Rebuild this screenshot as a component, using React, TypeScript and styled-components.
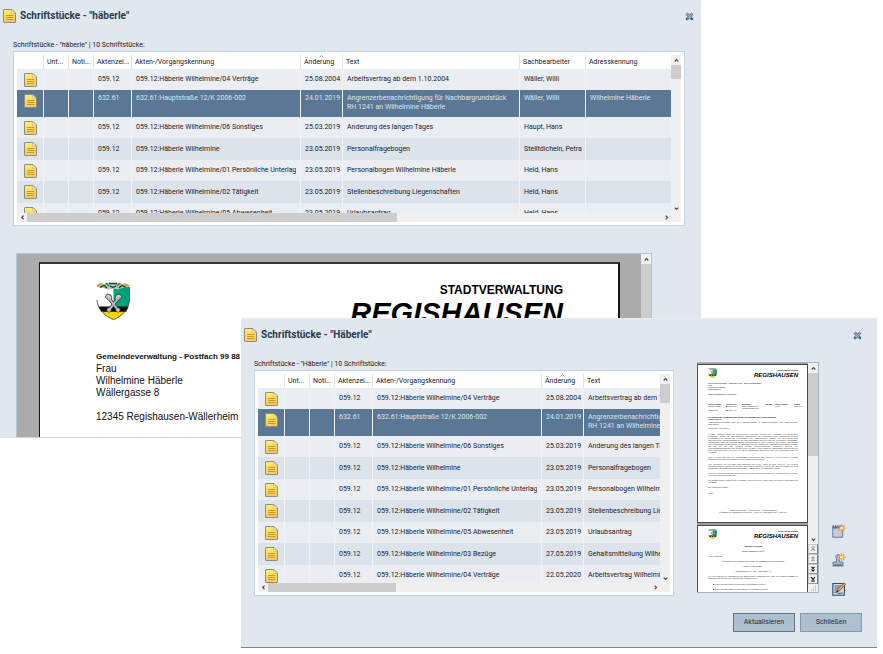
import React from "react";
import styled, { createGlobalStyle, css } from "styled-components";

const GlobalStyle = createGlobalStyle`
  *, *::before, *::after { box-sizing: border-box; }
  body { margin: 0; background: #fff; }
  button { font: inherit; padding: 0; border: 0; background: none; color: inherit; }
  h2, p, ul { margin: 0; padding: 0; font-weight: inherit; }
`;

const Desktop = styled.main`
  display: grid;
  min-height: 100vh;
  align-items: start;
  font-family: Roboto, "Noto Sans", sans-serif;
  font-size: 7px;
  line-height: 9px;
  color: #1d2026;
`;

const WindowFrame = styled.section<{ $front?: boolean }>`
  grid-area: 1 / 1;
  min-width: 0;
  background: #e0e7ee;
  margin-right: 182px;
  ${(p) =>
    p.$front &&
    css`
      position: relative;
      z-index: 1;
      margin: 318px 6px 0 241px;
      border-top: 1px solid #e6ecf2;
      border-bottom: 1px solid #7d848b;
    `}
`;

const TitleBar = styled.header`
  display: flex;
  align-items: center;
  gap: 4px;
  height: 32px;
  padding: 0 7px 0 3px;
`;

const Title = styled.h2`
  flex: 1;
  font-size: 10px;
  line-height: 14px;
  font-weight: 700;
  color: #2a3b4d;
`;

const CloseButton = styled.button<{ $inset?: boolean }>`
  display: flex;
  margin-right: ${(p) => (p.$inset ? 8 : 0)}px;
`;

const WindowBody = styled.div`
  display: flex;
  padding: 0 16px 0 13px;
`;

const ListSection = styled.div`
  flex: 1;
  min-width: 0;
  padding-top: 8px;
`;

const ListLabel = styled.p`
  line-height: 10px;
  margin-bottom: 1px;
`;

const Panel = styled.div`
  border: 1px solid #c8d4e0;
  background: #fff;
  padding: 3px;
`;

const PanelGrid = styled.div`
  display: grid;
  grid-template-columns: minmax(0, 1fr) 10px;
`;

const Viewport = styled.div<{ $height: number }>`
  height: ${(p) => p.$height}px;
  overflow: hidden;
`;

const Table = styled.table`
  width: 100%;
  min-width: 654px;
  table-layout: fixed;
  border-collapse: separate;
  border-spacing: 0;
`;

const Col = styled.col<{ $w?: number }>`
  width: ${(p) => (p.$w ? `${p.$w}px` : "auto")};
`;

const HeadCell = styled.th`
  position: relative;
  height: 14px;
  padding: 0 0 0 3px;
  border-left: 1px solid #e3e6e9;
  text-align: left;
  font-weight: 400;
  white-space: nowrap;
  &:first-child { border-left-color: transparent; }
`;

const SortMark = styled.svg`
  position: absolute;
  top: 0;
  left: 18px;
`;

const Row = styled.tr<{ $selected: boolean; $dark: boolean }>`
  background: ${(p) => (p.$selected ? "#5a7896" : p.$dark ? "#dce3eb" : "#eaeef3")};
  color: ${(p) => (p.$selected ? "#dbe5ee" : "inherit")};
  height: ${(p) => (p.$selected ? 27 : p.$dark ? 22 : 21)}px;
  td {
    padding: ${(p) => (p.$selected ? "4px 0 0 4px" : "0 0 0 4px")};
    vertical-align: ${(p) => (p.$selected ? "top" : "middle")};
  }
`;

const Cell = styled.td`
  border-left: 1px solid #f1f4f7;
  overflow: hidden;
  white-space: nowrap;
`;

const IconCell = styled.td`
  && { padding-left: 7px; }
  svg { display: block; }
`;

const CellText = styled.div`
  overflow: hidden;
  margin-right: 4px;
`;

const Track = styled.div<{ $vertical?: boolean }>`
  display: flex;
  flex-direction: ${(p) => (p.$vertical ? "column" : "row")};
  flex-shrink: 0;
  background: #f0f0f0;
  min-height: 9px;
  min-width: 10px;
`;

const Arrow = styled.button`
  display: flex;
  align-items: center;
  justify-content: center;
  flex: 0 0 10px;
  color: #505050;
`;

const Thumb = styled.div<{ $size: number }>`
  flex: 0 1 ${(p) => p.$size}px;
  background: #cdcdcd;
`;

const Spacer = styled.div`
  flex: 1;
`;

const Corner = styled.div`
  background: #f0f0f0;
`;

const Viewer = styled.div`
  display: flex;
  height: 185px;
  margin: 27px 49px 0 16px;
  border: 1px solid #b9c6d2;
  border-bottom-color: #cbd6e0;
  background: #ababab;
`;

const ViewerArea = styled.div`
  flex: 1;
  min-width: 0;
  overflow: hidden;
  padding: 8px 21px 0 22px;
`;

const Letter = styled.article`
  height: 420px;
  padding: 18px 55px 0 56px;
  border: 2px solid #161616;
  border-left-width: 1px;
  border-top-color: #333;
  background: #fff;
  font-family: "Liberation Sans", sans-serif;
  font-size: 10px;
  line-height: 12px;
  color: #111;
`;

const LetterHead = styled.div`
  display: flex;
  justify-content: space-between;
  height: 69px;
`;

const Brand = styled.div`
  text-align: right;
  font-weight: 700;
  color: #000;
`;

const BrandTop = styled.p`
  font-size: 12px;
  line-height: 17px;
`;

const BrandName = styled.p`
  font-size: 29px;
  line-height: 28px;
  font-style: italic;
`;

const Sender = styled.p`
  font-size: 8px;
  font-weight: 700;
`;

const AddressLine = styled.p`
  min-height: 12px;
`;

const Preview = styled.div`
  display: flex;
  flex: 0 0 122px;
  min-width: 0;
  height: 231px;
  margin: 11px 0 0 23px;
  background: #9b9fa3;
  border: 1px solid #aab4bd;
  border-left: 0;
`;

const PreviewPages = styled.div`
  flex: 1 1 0;
  min-width: 0;
  overflow: hidden;
  padding-top: 1px;
`;

const MiniPage = styled.article`
  height: 159px;
  margin-bottom: 2px;
  padding: 3px 9px 0 10px;
  border: 1px solid #4a4a4a;
  background: #fff;
  font-family: "Liberation Serif", serif;
  font-size: 2px;
  line-height: 2px;
  color: #000;
`;

const MiniHead = styled.div`
  display: flex;
  justify-content: space-between;
  height: 14px;
  font-family: "Liberation Sans", sans-serif;
`;

const MiniTop = styled.p`
  font-size: 2px;
  line-height: 4px;
`;

const MiniName = styled.p`
  font-size: 6px;
  line-height: 7px;
  font-style: italic;
`;

const MiniText = styled.p<{ $gap?: number; $bold?: boolean; $center?: boolean }>`
  margin-top: ${(p) => p.$gap ?? 0}px;
  font-weight: ${(p) => (p.$bold ? 700 : 400)};
  text-align: ${(p) => (p.$center ? "center" : "justify")};
`;

const MiniSans = styled(MiniText)`
  font-family: "Liberation Sans", sans-serif;
`;

const MiniColumns = styled.div`
  display: grid;
  grid-template-columns: 18px 16px 23px 10px 19px 1fr;
  height: 13px;
  margin-top: 8px;
  white-space: nowrap;
  b, span { display: block; }
`;

const MiniList = styled.ul`
  list-style: none;
  margin-top: 4px;
  padding-left: 5px;
  li { height: 5px; }
`;

const PageButton = styled.button`
  display: flex;
  align-items: center;
  justify-content: center;
  flex: 0 0 10px;
  && {
    border: 1px solid #c9c9c9;
    border-right-color: #777;
    border-bottom-color: #999;
    background: #f2f2f2;
  }
`;

const Tools = styled.div`
  display: flex;
  flex-direction: column;
  justify-content: flex-end;
  gap: 15px;
  margin: 0 15px 0 13px;
`;

const ToolButton = styled.button`
  display: flex;
`;

const Footer = styled.footer`
  display: flex;
  justify-content: flex-end;
  gap: 5px;
  padding: 17px 15px 15px;
`;

const ActionButton = styled.button<{ $primary?: boolean }>`
  && {
    width: 62px;
    height: 19px;
    border: 1px solid ${(p) => (p.$primary ? "#66727e" : "#8499ad")};
    background: #adc0d1;
    color: #1f2c3a;
  }
`;

const DocIcon = () => (
  <svg width="13" height="14" viewBox="0 0 13 14" aria-hidden="true">
    <defs>
      <linearGradient id="sheet" x1="0" y1="0" x2="0" y2="1">
        <stop offset="0" stopColor="#ffee6e" />
        <stop offset="0.5" stopColor="#fbdc58" />
        <stop offset="1" stopColor="#f5c766" />
      </linearGradient>
    </defs>
    <path d="M1 .5H9L12.500 4v9a.5.500 0 0 1-.5.500H1a.5.500 0 0 1-.5-.5V1A.5.500 0 0 1 1 .5Z" fill="url(#sheet)" stroke="#8d8c88" strokeWidth="1" />
    <path d="M8.500 1v3.500h3.500Z" fill="#f3eccb" stroke="#c2ad62" strokeWidth=".5" />
    <path d="M3 6.500h7.500M3 8.500h7.500M3 10.500h7.500" stroke="#c0922f" strokeWidth=".9" />
  </svg>
);

const CloseIcon = () => (
  <svg width="9" height="9" viewBox="0 0 9 9" aria-hidden="true">
    <path d="M1.500 1.500l6 6M7.500 1.500l-6 6" stroke="#6d869e" strokeWidth="3" />
    <path d="M1.600 1.600l5.800 5.800M7.400 1.600L1.600 7.400" stroke="#b4c5d4" strokeWidth=".9" />
    <path d="M6.200 6.200l1.600 1.600M1.200 7.800l1.200-1.200" stroke="#2f4d6c" strokeWidth="1.400" />
  </svg>
);

type Direction = "up" | "down" | "left" | "right";
const chevrons: Record<Direction, string> = {
  up: "M.7 3.5L2.5 1.7l1.8 1.8",
  down: "M.7 1.7l1.8 1.8 1.8-1.8",
  left: "M3.5.7L1.7 2.5l1.8 1.8",
  right: "M1.7.7l1.8 1.8-1.8 1.8",
};

const ScrollArrow = ({ to, label }: { to: Direction; label: string }) => (
  <Arrow type="button" aria-label={label}>
    <svg width="5" height="5" viewBox="0 0 5 5">
      <path d={chevrons[to]} fill="none" stroke="currentColor" strokeWidth="1.2" />
    </svg>
  </Arrow>
);

const Crest = ({ width, height }: { width: number; height: number }) => (
  <svg width={width} height={height} viewBox="0 0 34 38" role="img" aria-label="Wappen">
    <path d="M1 5h16.5v32.5C9 34 1.500 27 1 18Z" fill="#fff" />
    <path d="M17.500 5H33.500v13c-.3 3-1 5-2 7H17.500Z" fill="#00a07a" />
    <path d="M3.500 25H32c-3 6-8 10-14.500 12.700C11 35 6 31 3.500 25Z" fill="#f5d800" />
    <path d="M2.500 24.500h30.200l-2.500 5.200H5.200Z" fill="#0b0b0b" />
    <path d="M1 18c.5 9 7.500 16 16.500 19.700C26.500 34 33.500 27 33.700 16V5" fill="none" stroke="#3a3a2a" strokeWidth=".8" />
    <path d="M0 4l4-3 5 1 3-1.500 5 .8 5-.8 4 1.500 4-1 4 3-4 1.500-4 .5-4 1.500-5-1-5 1-5-1.500-4-.5Z" fill="#b8c3b4" />
    <path d="M1 4l3-1.500L7 4M27 4l3-1.500L33 4M9 2l3 1M22 3l3-1" stroke="#c3a30e" strokeWidth="1.500" fill="none" />
    <path d="M4 5.500l4-2 3 2.500M13 1.500h8M14 4l3 1.500L20 4M23 6l3-2.500 4 2" stroke="#23402f" strokeWidth="1.300" fill="none" />
    <path d="M10 1l3 3M24 1l-3 3" stroke="#0d9b75" strokeWidth="1.500" />
    <g fill="none" stroke="#3b3b3b" strokeWidth="3.200">
      <path d="M12 15l9.500 12.500M23 15l-9.500 12.500" />
    </g>
    <g fill="#c9c9c9" stroke="#3b3b3b" strokeWidth=".8">
      <path d="M9 15l2-3 4 1 1 4-3 1.500ZM26 15l-2-3-4 1-1 4 3 1.500Z" />
      <circle cx="13" cy="28" r="2.200" />
      <circle cx="22" cy="28" r="2.200" />
    </g>
    <path d="M12 15l9.500 12.500M23 15l-9.500 12.500" stroke="#bdbdbd" strokeWidth="1.800" />
  </svg>
);

const Star = () => (
  <g stroke="#f0a040" strokeWidth="1.200">
    <path d="M9.500 0v8.400M5.300 4.200h8.400M6.500 1.200l6 6M12.500 1.200l-6 6" />
    <circle cx="9.500" cy="4.200" r="1.400" fill="#ffe6b8" stroke="none" />
  </g>
);

const NewNoteIcon = () => (
  <svg width="14" height="14" viewBox="0 0 14 14" aria-hidden="true">
    <path d="M.7 2h10v11.300H.7Z" fill="#b9c8d7" stroke="#71869b" />
    <path d="M.7 1.500h9v3H.7Z" fill="#5b6f86" />
    <path d="M2.500.5v2M4.800.5v2M7 .5v2" stroke="#dfe7ee" strokeWidth=".9" />
    <path d="M2 7h7M2 9h7M2 11h7" stroke="#cfdae4" strokeWidth=".7" />
    <Star />
  </svg>
);

const StampIcon = () => (
  <svg width="14" height="14" viewBox="0 0 14 14" aria-hidden="true">
    <path d="M4.500 5.500a2.300 2.300 0 1 1 3 0L7.500 9H11v2.500H1V9h3.500Z" fill="#a4b5c7" stroke="#687f97" strokeWidth=".9" />
    <path d="M.5 12.800h11" stroke="#4f667e" strokeWidth="1.200" />
    <Star />
  </svg>
);

const EditIcon = () => (
  <svg width="14" height="14" viewBox="0 0 14 14" aria-hidden="true">
    <path d="M.8 1.500h11.700v11.700H.8Z" fill="#c9d6e2" stroke="#3d4d5e" strokeWidth="1.100" />
    <path d="M2.500 4h6M2.500 6h5M2.500 8h3M2.500 10.500l2-.5 1.500 1.500 5-.5" stroke="#52687f" strokeWidth="1" fill="none" />
    <path d="M4.800 9.800l1-2.800L12 .8l1.600 1.400L7.500 8.800Z" fill="#f0a03c" stroke="#5a4630" strokeWidth=".7" />
    <path d="M4.200 10.600l1-2.300 1.500 1.300Z" fill="#222" />
  </svg>
);

type Entry = { ref: string; file: string; date: string; text: string[]; clerk: string; address?: string };

const entries: Entry[] = [
  { ref: "059.12", file: "059.12:Häberle Wilhelmine/04 Verträge", date: "25.08.2004", text: ["Arbeitsvertrag ab dem 1.10.2004"], clerk: "Wäller, Willi" },
  { ref: "632.61", file: "632.61:Hauptstraße 12/K 2006-002", date: "24.01.2019", text: ["Angrenzerbenachrichtigung für Nachbargrundstück", "RH 1241 an Wilhelmine Häberle"], clerk: "Wäller, Willi", address: "Wilhelmine Häberle" },
  { ref: "059.12", file: "059.12:Häberle Wilhelmine/06 Sonstiges", date: "25.03.2019", text: ["Änderung des langen Tages"], clerk: "Haupt, Hans" },
  { ref: "059.12", file: "059.12:Häberle Wilhelmine", date: "23.05.2019", text: ["Personalfragebogen"], clerk: "Stelltdichein, Petra" },
  { ref: "059.12", file: "059.12:Häberle Wilhelmine/01 Persönliche Unterlagen", date: "23.05.2019", text: ["Personalbogen Wilhelmine Häberle"], clerk: "Held, Hans" },
  { ref: "059.12", file: "059.12:Häberle Wilhelmine/02 Tätigkeit", date: "23.05.2019", text: ["Stellenbeschreibung Liegenschaften"], clerk: "Held, Hans" },
  { ref: "059.12", file: "059.12:Häberle Wilhelmine/05 Abwesenheit", date: "23.05.2019", text: ["Urlaubsantrag"], clerk: "Held, Hans" },
  { ref: "059.12", file: "059.12:Häberle Wilhelmine/03 Bezüge", date: "27.05.2019", text: ["Gehaltsmitteilung Wilhelmine Häberle"], clerk: "Held, Hans" },
  { ref: "059.12", file: "059.12:Häberle Wilhelmine/04 Verträge", date: "22.05.2020", text: ["Arbeitsvertrag Wilhelmine Häberle"], clerk: "Held, Hans" },
];

const widths = [26, 25, 25, 38, 169, 42, 177, 66];
const heads = ["", "Unt...", "Noti...", "Aktenzei...", "Akten-/Vorgangskennung", "Änderung", "Text", "Sachbearbeiter", "Adresskennung"];

type ListProps = { name: string; rows: Entry[]; height: number; vThumb: number; hThumb: number };

const DocumentList = ({ name, rows, height, vThumb, hThumb }: ListProps) => (
  <ListSection>
    <ListLabel>Schriftstücke - "{name}" | 10 Schriftstücke:</ListLabel>
    <Panel>
      <PanelGrid>
        <Viewport $height={height}>
          <Table aria-label={`Schriftstücke ${name}`}>
            <colgroup>
              {widths.map((w, i) => <Col key={i} $w={w} />)}
              <Col />
            </colgroup>
            <thead>
              <tr>
                {heads.map((h) => (
                  <HeadCell key={h} scope="col">
                    {h}
                    {h === "Änderung" && (
                      <SortMark width="5" height="3" viewBox="0 0 5 3">
                        <path d="M.5 2.500l2-2 2 2" fill="none" stroke="#777" strokeWidth=".7" />
                      </SortMark>
                    )}
                  </HeadCell>
                ))}
              </tr>
            </thead>
            <tbody>
              {rows.map((e, i) => (
                <Row key={i} $selected={i === 1} $dark={i % 2 === 1} aria-selected={i === 1}>
                  <IconCell><DocIcon /></IconCell>
                  <Cell />
                  <Cell />
                  <Cell>{e.ref}</Cell>
                  <Cell><CellText>{e.file}</CellText></Cell>
                  <Cell>{e.date}</Cell>
                  <Cell>{e.text.map((t) => <CellText key={t}>{t}</CellText>)}</Cell>
                  <Cell>{e.clerk}</Cell>
                  <Cell>{e.address}</Cell>
                </Row>
              ))}
            </tbody>
          </Table>
        </Viewport>
        <Track $vertical>
          <ScrollArrow to="up" label="Nach oben" />
          <Thumb $size={vThumb} />
          <Spacer />
          <ScrollArrow to="down" label="Nach unten" />
        </Track>
        <Track>
          <ScrollArrow to="left" label="Nach links" />
          <Thumb $size={hThumb} />
          <Spacer />
          <ScrollArrow to="right" label="Nach rechts" />
        </Track>
        <Corner />
      </PanelGrid>
    </Panel>
  </ListSection>
);

const MiniHeader = () => (
  <MiniHead>
    <Crest width={9} height={10} />
    <Brand>
      <MiniTop>STADTVERWALTUNG</MiniTop>
      <MiniName>REGISHAUSEN</MiniName>
    </Brand>
  </MiniHead>
);

const pageIcons = [
  { label: "Erste Seite", d: "M1 1h4M1 5l2-2.500L5 5", c: "#999" },
  { label: "Vorige Seite", d: "M1.500 2.500L3 1l1.500 1.500M1.500 5L3 3.500 4.500 5", c: "#999" },
  { label: "Nächste Seite", d: "M1.500 1L3 2.500 4.500 1M1.500 3.500L3 5l1.500-1.500", c: "#111" },
  { label: "Letzte Seite", d: "M1 1l2 2.500L5 1M1 5h4", c: "#111" },
];

export default function App() {
  return (
    <>
      <GlobalStyle />
      <Desktop>
        <WindowFrame aria-label="Schriftstücke häberle">
          <TitleBar>
            <DocIcon />
            <Title>Schriftstücke - "häberle"</Title>
            <CloseButton type="button" aria-label="Schließen"><CloseIcon /></CloseButton>
          </TitleBar>
          <WindowBody>
            <DocumentList name="häberle" rows={entries.slice(0, 7)} height={158} vThumb={14} hThumb={370} />
          </WindowBody>
          <Viewer>
            <ViewerArea>
              <Letter>
                <LetterHead>
                  <Crest width={34} height={38} />
                  <Brand>
                    <BrandTop>STADTVERWALTUNG</BrandTop>
                    <BrandName>REGISHAUSEN</BrandName>
                  </Brand>
                </LetterHead>
                <Sender>Gemeindeverwaltung - Postfach 99 88 - 12345 Regishausen</Sender>
                <AddressLine>Frau</AddressLine>
                <AddressLine>Wilhelmine Häberle</AddressLine>
                <AddressLine>Wällergasse 8</AddressLine>
                <AddressLine />
                <AddressLine>12345 Regishausen-Wällerheim</AddressLine>
              </Letter>
            </ViewerArea>
            <Track $vertical>
              <ScrollArrow to="up" label="Nach oben" />
              <Thumb $size={175} />
            </Track>
          </Viewer>
        </WindowFrame>

        <WindowFrame $front aria-label="Schriftstücke Häberle">
          <TitleBar>
            <DocIcon />
            <Title>Schriftstücke - "Häberle"</Title>
            <CloseButton type="button" aria-label="Schließen" $inset><CloseIcon /></CloseButton>
          </TitleBar>
          <WindowBody>
            <DocumentList name="Häberle" rows={entries} height={209} vThumb={19} hThumb={128} />
            <Preview>
              <PreviewPages>
                <MiniPage>
                  <MiniHeader />
                  <MiniSans>Gemeindeverwaltung - Postfach 99 88 - 12345 Regishausen</MiniSans>
                  <MiniSans>Frau</MiniSans>
                  <MiniSans>Wilhelmine Häberle</MiniSans>
                  <MiniSans>Wällergasse 8</MiniSans>
                  <MiniSans $gap={3}>12345 Regishausen-Wällerheim</MiniSans>
                  <MiniColumns>
                    <div><b>Bauverwaltung</b><span>Rathaus Zimmer</span><MiniText $gap={2}>Regishausen</MiniText></div>
                    <div><b>Telefon / Fax</b><span>■ 09876 / 54</span><MiniText $gap={2}>■ 09876 / 55</MiniText></div>
                    <div><b>■ Internet</b><span>www.regishausen.de</span><span>info@regishausen.de</span></div>
                    <div><b>Zeichen</b></div>
                    <div><b>Unser Zeichen</b><span>632.61</span></div>
                    <div><b>Datum</b><span>24.01.2019</span></div>
                  </MiniColumns>
                  <MiniText $bold>Errichtung eines Wohnhauses mit Garage auf Baugrundstück, Nebelsteingrund</MiniText>
                  <MiniText $bold>Hauptstraße 12</MiniText>
                  <MiniText $gap={1}>Angrenzerbenachrichtigung nach §59 Landesbauordnung für Baden-Württemberg von einem geplanten Bauvorhaben</MiniText>
                  <MiniText $gap={2}>Sehr geehrte Frau Häberle,</MiniText>
                  <MiniText $gap={4}>
                    in obiger Bausache haben wir am 24.01.2019 Unterlagen erhalten. Die Eigentümer der angrenzenden Grundstücke werden von dem Bauantrag benachrichtigt. Die Bauvorlagen liegen während der üblichen Dienststunden zur Einsicht aus. Einwendungen von Angrenzern sind innerhalb von zwei Wochen nach Zustellung dieser Benachrichtigung bei der Stadt Regishausen schriftlich oder zur Niederschrift vorzubringen. Einwendungen gegen das Vorhaben müssen unterschrieben sein. Nach Ablauf der Frist werden Angrenzer mit allen Einwendungen ausgeschlossen, die im Rahmen der Beteiligung nicht fristgemäß geltend gemacht wurden und sich auf von dem Vorhaben berührte öffentlich-rechtliche Vorschriften beziehen. Der Einwendungsausschluss gilt auch für das weitere Verfahren. Nicht fristgerecht eingegangene Schreiben bleiben dabei unberücksichtigt. Wir bitten Sie um Kenntnisnahme und stehen Ihnen bei Rückfragen gerne zur Verfügung.
                  </MiniText>
                  <MiniText $gap={3}>Wenn Sie vom Planer mit der Stellungnahme einverstanden sind, können Sie die beiliegende Erklärung unterschrieben an uns zurücksenden, auf dem Postweg oder persönlich.</MiniText>
                  <MiniText $gap={3}>Eine Zweitschrift der Unterlagen zum Bauantrag liegt in der Anlage zu Ihren Akten bei. Die weiteren Unterlagen können während der üblichen Sprechzeiten eingesehen werden, und zwar im Rathaus der Stadt Regishausen, im Bauamt im ersten Obergeschoss, Zimmer zwölf, von Montag bis Freitag.</MiniText>
                  <MiniText $gap={3}>Sollten wir von Ihnen innerhalb von 14 Tagen nach Erhalt dieses Schreibens keine Nachricht erhalten, so gehen wir von Ihrem Einverständnis aus.</MiniText>
                  <MiniText $gap={3}>Wir bedanken uns bei Ihnen für die Erledigung. Sollten Sie weitere Fragen haben, so stehen wir Ihnen gerne zur Verfügung.</MiniText>
                  <MiniText $gap={3}>Mit freundlichen Grüßen</MiniText>
                  <MiniText $gap={4}>Wäller</MiniText>
                  <MiniText $gap={15} $center>Gemeindeverwaltung - Postfach 99 88 - 12345 Regishausen</MiniText>
                  <MiniText $center>Öffnungszeiten: Montag bis Freitag 8.00 - 12.00 Uhr, Donnerstag 14.00 - 18.00 Uhr</MiniText>
                </MiniPage>
                <MiniPage>
                  <MiniHeader />
                  <MiniText $gap={2} $bold $center>Angrenzer-Erklärung</MiniText>
                  <MiniText $gap={3} $center>Baugenehmigungsverfahren</MiniText>
                  <MiniText $gap={3}>An die Gemeinde</MiniText>
                  <MiniText $gap={3} $center>Errichtung eines Wohnhauses mit Garage auf Baugrundstück Nebelsteingrund</MiniText>
                  <MiniText $gap={3} $center>Bauherr: Hans Schmidt</MiniText>
                  <MiniText $gap={3} $center>Baugrundstück: Flst. 1241 / Hauptstraße 12</MiniText>
                  <MiniText $gap={3}>Ich / wir erkläre(n) als Eigentümer(in) des angrenzenden Grundstückes RH 1241 zur Kenntnis genommen zu haben und nach Einsicht in die Bauvorlagen vom 24.01.2019:</MiniText>
                  <MiniList>
                    <li>■ Gegen das Bauvorhaben werden keine Einwendungen erhoben.</li>
                    <li>■ Gegen das Bauvorhaben werden folgende Einwendungen erhoben:</li>
                  </MiniList>
                </MiniPage>
              </PreviewPages>
              <Track $vertical>
                <ScrollArrow to="up" label="Nach oben" />
                <Thumb $size={83} />
                <Spacer />
                <ScrollArrow to="down" label="Nach unten" />
                {pageIcons.map((p) => (
                  <PageButton key={p.label} type="button" aria-label={p.label}>
                    <svg width="6" height="6" viewBox="0 0 6 6">
                      <path d={p.d} stroke={p.c} fill="none" strokeWidth="1.100" />
                    </svg>
                  </PageButton>
                ))}
                <svg width="10" height="8" viewBox="0 0 10 8" aria-hidden="true">
                  <path d="M7 2h1M5 4h1M7 4h1M3 6h1M5 6h1M7 6h1" stroke="#aaa" />
                </svg>
              </Track>
            </Preview>
            <Tools>
              <ToolButton type="button" aria-label="Neue Notiz"><NewNoteIcon /></ToolButton>
              <ToolButton type="button" aria-label="Neuer Stempel"><StampIcon /></ToolButton>
              <ToolButton type="button" aria-label="Bearbeiten"><EditIcon /></ToolButton>
            </Tools>
          </WindowBody>
          <Footer>
            <ActionButton type="button" $primary>Aktualisieren</ActionButton>
            <ActionButton type="button">Schließen</ActionButton>
          </Footer>
        </WindowFrame>
      </Desktop>
    </>
  );
}
